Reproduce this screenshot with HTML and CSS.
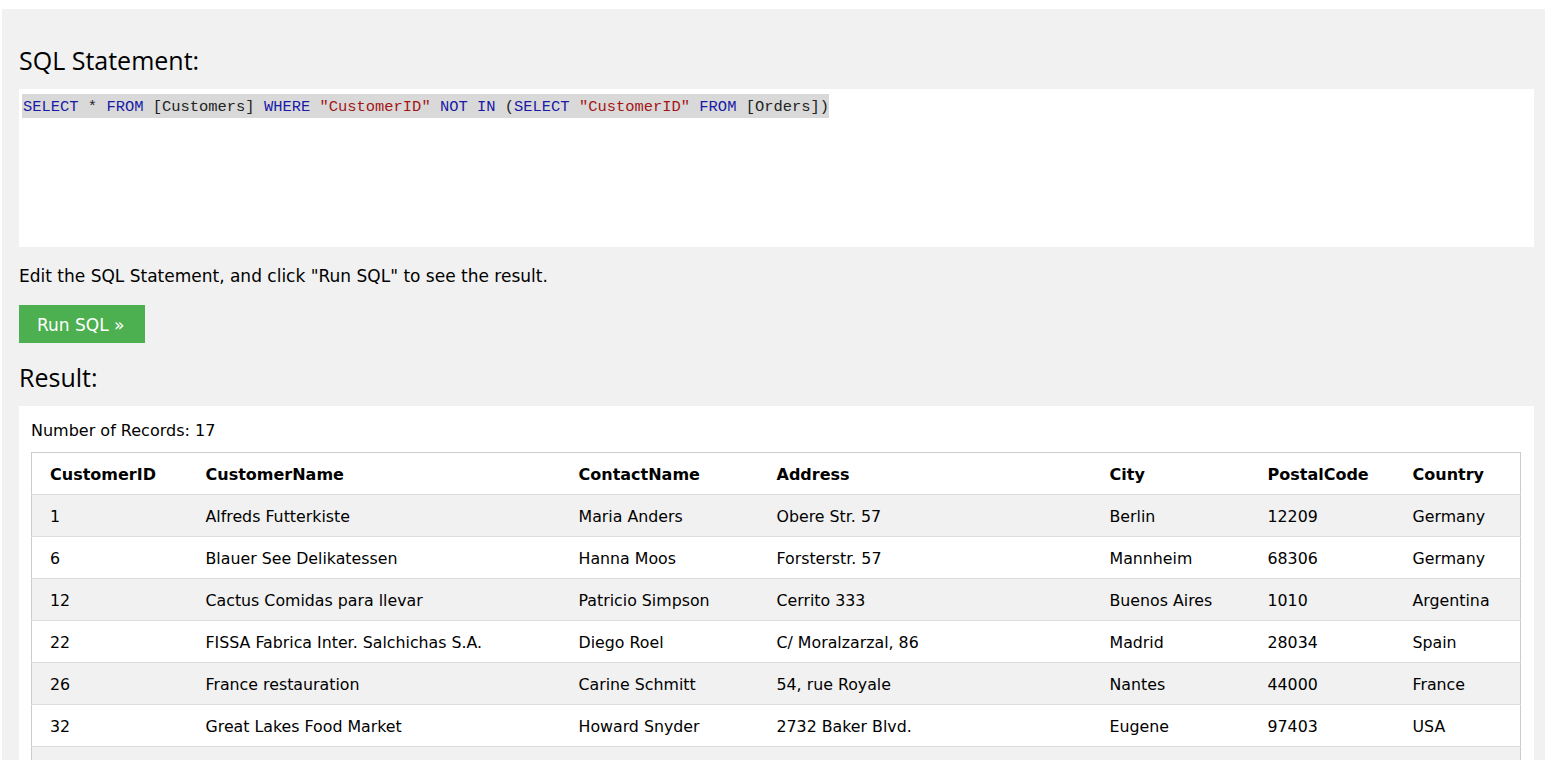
FILE: index.html
```html
<!DOCTYPE html>
<html>
<head>
<meta charset="utf-8">
<link rel="stylesheet" href="styles.css">
</head>
<body>
<div class="panel">
  <h3 class="heading">SQL Statement:</h3>
  <div class="editor"><span class="sel"><span class="kw">SELECT</span> * <span class="kw">FROM</span> [Customers] <span class="kw">WHERE</span> <span class="str">"CustomerID"</span> <span class="kw">NOT</span> <span class="kw">IN</span> (<span class="kw">SELECT</span> <span class="str">"CustomerID"</span> <span class="kw">FROM</span> [Orders])</span></div>
  <p class="hint">Edit the SQL Statement, and click "Run SQL" to see the result.</p>
  <button class="run">Run SQL »</button>
  <h3 class="heading result-h">Result:</h3>
  <div class="result">
    <div class="count">Number of Records: 17</div>
    <table class="grid">
      <colgroup>
        <col class="c1"><col class="c2"><col class="c3"><col class="c4"><col class="c5"><col class="c6"><col class="c7">
      </colgroup>
      <tr><th>CustomerID</th><th>CustomerName</th><th>ContactName</th><th>Address</th><th>City</th><th>PostalCode</th><th>Country</th></tr>
      <tr><td>1</td><td>Alfreds Futterkiste</td><td>Maria Anders</td><td>Obere Str. 57</td><td>Berlin</td><td>12209</td><td>Germany</td></tr>
      <tr><td>6</td><td>Blauer See Delikatessen</td><td>Hanna Moos</td><td>Forsterstr. 57</td><td>Mannheim</td><td>68306</td><td>Germany</td></tr>
      <tr><td>12</td><td>Cactus Comidas para llevar</td><td>Patricio Simpson</td><td>Cerrito 333</td><td>Buenos Aires</td><td>1010</td><td>Argentina</td></tr>
      <tr><td>22</td><td>FISSA Fabrica Inter. Salchichas S.A.</td><td>Diego Roel</td><td>C/ Moralzarzal, 86</td><td>Madrid</td><td>28034</td><td>Spain</td></tr>
      <tr><td>26</td><td>France restauration</td><td>Carine Schmitt</td><td>54, rue Royale</td><td>Nantes</td><td>44000</td><td>France</td></tr>
      <tr><td>32</td><td>Great Lakes Food Market</td><td>Howard Snyder</td><td>2732 Baker Blvd.</td><td>Eugene</td><td>97403</td><td>USA</td></tr>
      <tr><td>&nbsp;</td><td></td><td></td><td></td><td></td><td></td><td></td></tr>
    </table>
  </div>
</div>
</body>
</html>
```
FILE: styles.css
```css
html, body {
  margin: 0;
  padding: 0;
  background: #ffffff;
  overflow: hidden;
}
body {
  font-family: "DejaVu Sans", Verdana, sans-serif;
  font-size: 16px;
  color: #000;
}
.panel {
  margin: 9px 0 0 2px;
  background: #f1f1f1;
  padding: 33px 11px 0 17px;
  height: 760px;
  box-sizing: border-box;
}
.heading {
  margin: 0;
  font-family: "Open Sans", "Noto Sans", sans-serif;
  font-weight: 400;
  font-size: 25px;
  line-height: 36px;
  color: #000;
}
.editor {
  margin-top: 11px;
  background: #fff;
  height: 158px;
  box-sizing: border-box;
  padding: 5px 4px;
  font-family: "Liberation Mono", "DejaVu Sans Mono", monospace;
  font-size: 15.45px;
  line-height: 24px;
  color: #222;
  white-space: pre;
}
.sel {
  background: #d9d9d9;
  display: inline-block;
  padding: 1px 0 0 1px;
  height: 23px;
  margin-left: -1px;
}
.kw { color: #1a1aa6; }
.str { color: #a31515; }
.hint {
  margin: 17px 0 0;
  line-height: 24px;
  font-size: 17px;
}
.run {
  display: block;
  margin-top: 17px;
  height: 38px;
  padding: 1px 21px 0 18px;
  border: none;
  background: #4caf50;
  color: #fff;
  font-family: "DejaVu Sans", Verdana, sans-serif;
  font-size: 17px;
}
.result-h {
  margin-top: 16px;
}
.result {
  margin-top: 11px;
  background: #fff;
  padding: 13px 13px 0 12px;
  height: 400px;
}
.count {
  line-height: 24px;
  font-size: 16px;
}
.grid {
  margin-top: 9px;
  width: 100%;
  border-collapse: collapse;
  table-layout: fixed;
  border: 1px solid #ccc;
  font-size: 16px;
}
.grid tr {
  height: 42px;
}
.grid th, .grid td {
  text-align: left;
  padding: 2px 8px 0;
  border-bottom: 1px solid #ddd;
  white-space: nowrap;
  overflow: hidden;
}
.grid td { font-size: 15.8px; }
.grid th { font-weight: bold; }
.grid th:first-child, .grid td:first-child { padding-left: 18px; }
.grid tr:nth-child(even) { background: #f1f1f1; }
.grid tr:first-child { background: #fff; }
.c1 { width: 166px; }
.c2 { width: 373px; }
.c3 { width: 198px; }
.c4 { width: 333px; }
.c5 { width: 158px; }
.c6 { width: 145px; }
.c7 { width: auto; }
```
